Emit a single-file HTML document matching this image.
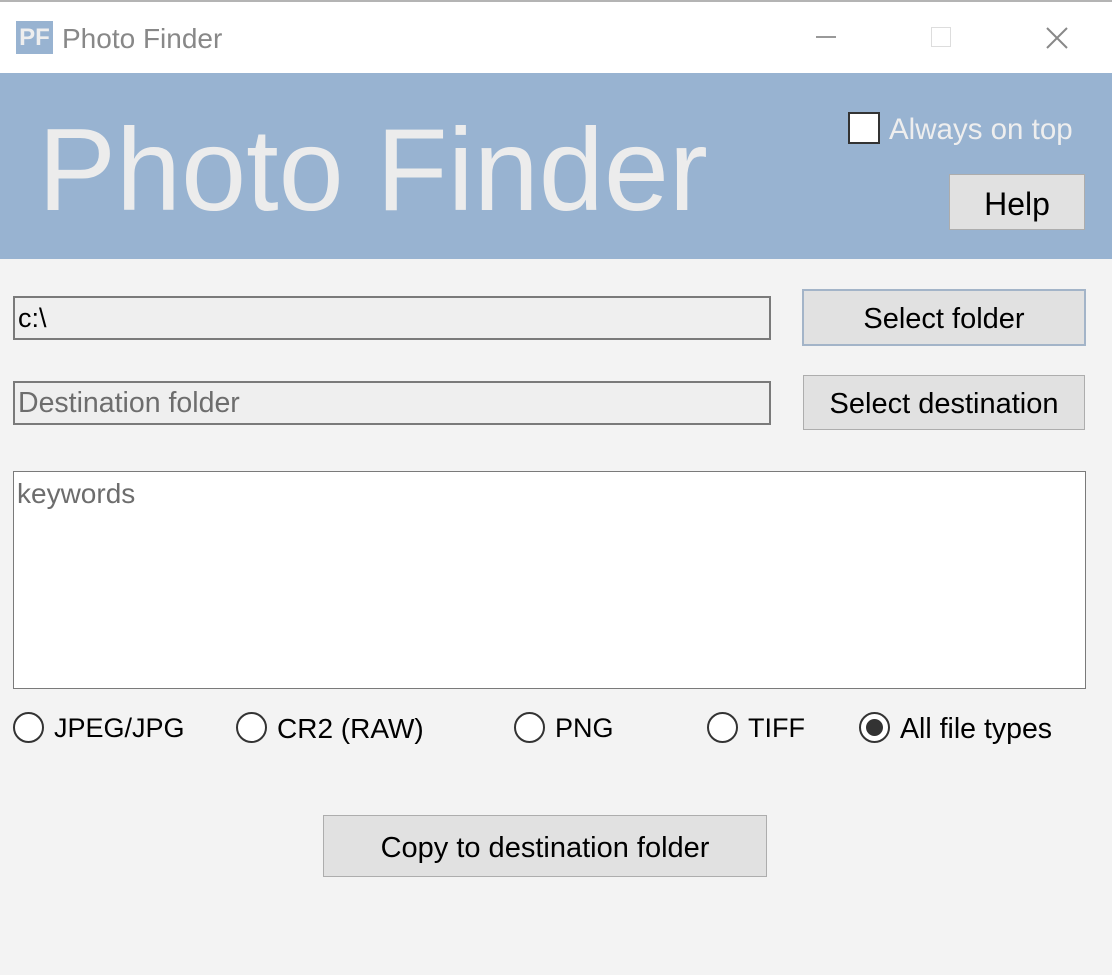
<!DOCTYPE html>
<html><head><meta charset="utf-8"><style>
*{box-sizing:border-box;margin:0;padding:0}
body{width:1112px;height:975px;background:#f3f3f3;font-family:"Liberation Sans",sans-serif;position:relative;overflow:hidden}
.a{position:absolute}
.title{left:0;top:0;width:1112px;height:73px;background:#fff;border-top:2px solid #b4b4b4}
.hdr{left:0;top:73px;width:1112px;height:186px;background:#98b3d1}
.inp{background:#efefef;border:2px solid #7a7a7a;font-size:27px;padding-left:3px;line-height:40px}
.btn{background:#e1e1e1;border:1px solid #adadad;font-size:29px;color:#000;text-align:center}
.rad{width:31px;height:31px;border:2px solid #333;border-radius:50%;background:#fff;top:712px}
.rl{font-size:27px;top:713px;color:#000}
</style></head><body>
<div class="a title"></div>
<div class="a" style="left:16px;top:21px;width:37px;height:33px;background:#98b3d1;color:#eee;font-weight:bold;font-size:24px;line-height:33px;text-align:center">PF</div>
<div class="a" style="left:62px;top:23px;font-size:28px;color:#888">Photo Finder</div>
<div class="a" style="left:816px;top:36px;width:20px;height:2px;background:#999"></div>
<div class="a" style="left:931px;top:27px;width:20px;height:20px;border:1px solid #ddd"></div>
<svg class="a" style="left:1046px;top:27px" width="22" height="22"><path d="M1 1L21 21M21 1L1 21" stroke="#888" stroke-width="2"/></svg>
<div class="a hdr"></div>
<div class="a" style="left:38px;top:102px;font-size:117px;color:#ececec">Photo Finder</div>
<div class="a" style="left:848px;top:112px;width:32px;height:32px;border:2px solid #333;background:#fff"></div>
<div class="a" style="left:889px;top:113px;font-size:29.5px;color:#eeeeee">Always on top</div>
<div class="a btn" style="left:949px;top:174px;width:136px;height:56px;line-height:58px;font-size:32px">Help</div>
<div class="a inp" style="left:13px;top:296px;width:758px;height:44px;color:#000">c:\</div>
<div class="a btn" style="left:802px;top:289px;width:284px;height:57px;line-height:57px;border:2px solid #a3b4c8">Select folder</div>
<div class="a inp" style="left:13px;top:381px;width:758px;height:44px;color:#6d6d6d;font-size:28.5px">Destination folder</div>
<div class="a btn" style="left:803px;top:375px;width:282px;height:55px;line-height:57px">Select destination</div>
<div class="a" style="left:13px;top:471px;width:1073px;height:218px;background:#fff;border:1px solid #7a7a7a;font-size:28px;color:#6d6d6d;padding:6px 3px">keywords</div>
<div class="a rad" style="left:13px"></div><div class="a rl" style="left:54px">JPEG/JPG</div>
<div class="a rad" style="left:236px"></div><div class="a rl" style="left:277px;font-size:28px">CR2 (RAW)</div>
<div class="a rad" style="left:514px"></div><div class="a rl" style="left:555px">PNG</div>
<div class="a rad" style="left:707px"></div><div class="a rl" style="left:748px">TIFF</div>
<div class="a rad" style="left:859px"><div style="width:17px;height:17px;border-radius:50%;background:#333;margin:5px"></div></div><div class="a rl" style="left:900px;font-size:28.5px">All file types</div>
<div class="a btn" style="left:323px;top:815px;width:444px;height:62px;line-height:64px">Copy to destination folder</div>
</body></html>
